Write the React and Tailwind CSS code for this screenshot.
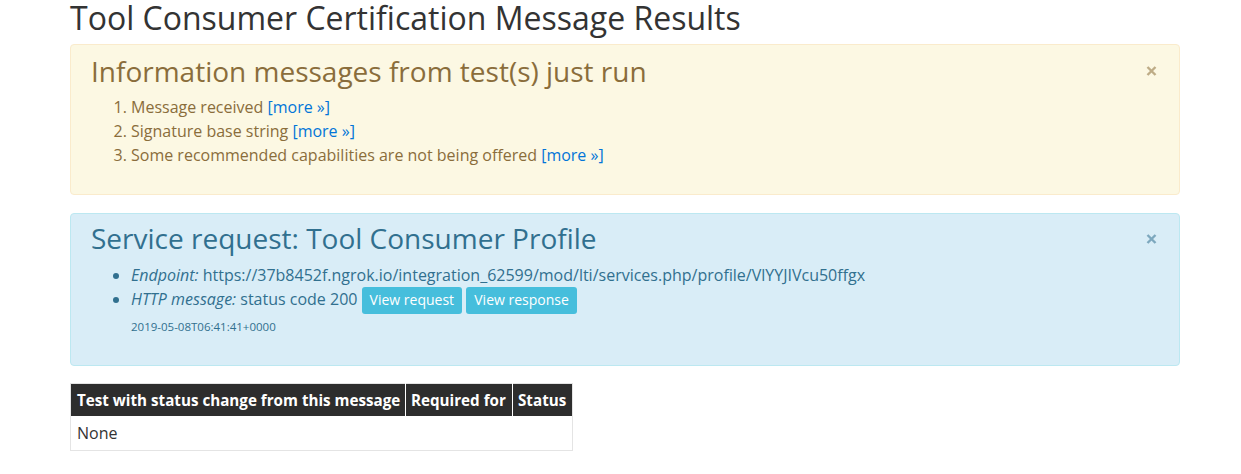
import React from "react";

const font = { fontFamily: '"Open Sans", "Noto Sans", sans-serif' };

function CloseX({ color }) {
  return (
    <svg width="11" height="10" viewBox="0 0 11 10" className="shrink-0 mr-[22px]" aria-hidden="true">
      <path d="M1.5 1 L9.5 9 M9.5 1 L1.5 9" stroke={color} strokeWidth="2.4" strokeLinecap="butt" />
    </svg>
  );
}

function More() {
  return <a href="#" className="text-[#0275d8]">[more »]</a>;
}

const btn =
  "inline-block whitespace-nowrap bg-[#46bedc] text-white text-[14px] leading-[19px] pt-[3px] pb-[5px] px-[8px] rounded-[3px] align-baseline";

export default function App() {
  return (
    <div className="bg-white min-h-[474px]" style={font}>
      <div className="ml-[70px] w-[1110px]">
        <h1 className="text-[32px] leading-[35px] font-medium text-[#333] m-0 mb-[9px]">
          Tool Consumer Certification Message Results
        </h1>

        <div className="border border-[#faebcc] bg-[#fcf8e3] rounded-[4px] text-[#8a6d3b] pt-[10.7px] pl-[20px] h-[151px]">
          <div className="flex items-center">
            <h3 className="flex-1 text-[28px] leading-[30.8px] font-medium m-0">
              Information messages from test(s) just run
            </h3>
            <CloseX color="rgba(138,109,59,0.55)" />
          </div>
          <ol className="list-decimal pl-[40px] mt-[9px] text-[16px] leading-[24px]">
            <li>Message received <More /></li>
            <li>Signature base string <More /></li>
            <li>Some recommended capabilities are not being offered <More /></li>
          </ol>
        </div>

        <div className="mt-[18px] border border-[#bce8f1] bg-[#d9edf7] rounded-[4px] text-[#31708f] pt-[9.3px] pl-[20px] h-[153px]">
          <div className="flex items-center">
            <h3 className="flex-1 text-[28px] leading-[30.8px] font-medium m-0">
              Service request: Tool Consumer Profile
            </h3>
            <CloseX color="rgba(49,112,143,0.55)" />
          </div>
          <ul className="list-disc pl-[40px] mt-[9px] text-[16px] leading-[24px]">
            <li>
              <em>Endpoint:</em> https://37b8452f.ngrok.io/integration_62599/mod/lti/services.php/profile/VlYYJIVcu50ffgx
            </li>
            <li className="whitespace-nowrap">
              <em>HTTP message:</em> status code 200{" "}
              <button className={btn}>View request</button>{" "}
              <button className={btn}>View response</button>
            </li>
          </ul>
          <div className="pl-[40px] mt-[3.5px] text-[11.5px] leading-[17px]">2019-05-08T06:41:41+0000</div>
        </div>

        <table className="mt-[17px] border-collapse table-fixed w-[502px] border border-[#e4e4e4]">
          <colgroup>
            <col className="w-[335px]" />
            <col className="w-[107px]" />
            <col className="w-[60px]" />
          </colgroup>
          <thead>
            <tr className="bg-[#2d2d2d] text-white text-[15.2px] leading-[20px] font-bold text-left">
              <th className="pl-[6px] pr-[4px] pt-[6px] pb-[6px] border-r border-white whitespace-nowrap">Test with status change from this message</th>
              <th className="pl-[5px] pt-[6px] pb-[6px] border-r border-white whitespace-nowrap">Required for</th>
              <th className="pl-[5px] pt-[6px] pb-[6px] whitespace-nowrap">Status</th>
            </tr>
          </thead>
          <tbody>
            <tr className="text-[16px] leading-[24px] text-[#333]">
              <td className="pl-[6px] py-[5px]">None</td>
              <td className="py-[5px]"></td>
              <td className="py-[5px]"></td>
            </tr>
          </tbody>
        </table>
      </div>
    </div>
  );
}
